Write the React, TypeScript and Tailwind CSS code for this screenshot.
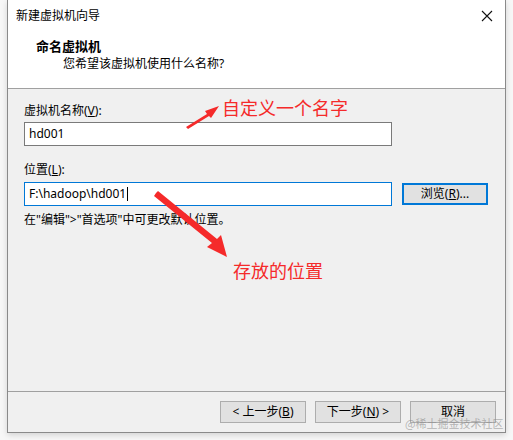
import React from "react";

const font = { fontFamily: '"Segoe UI", "Noto Sans", "Noto Sans CJK SC", sans-serif' };

function WinButton({ children, focused }: { children: React.ReactNode; focused?: boolean }) {
  return (
    <button
      className={`h-[22px] w-[86px] bg-[#e1e1e1] text-[12px] leading-none text-black flex items-center justify-center ${
        focused ? "border-2 border-[#0078d7]" : "border border-[#adadad]"
      }`}
    >
      {children}
    </button>
  );
}

function Arrows() {
  return (
    <svg className="absolute left-0 top-0 pointer-events-none" width="513" height="440">
      {/* arrow to name label */}
      <polygon points="186,127 207,114 205,111 219,106 211,118 209,116 188,129" fill="#f52a2a" />
      {/* arrow to location label */}
      <polygon points="156,193 158,191 217,239 221,235 227,257 207,247 212,243 154,196" fill="#f52a2a" />
    </svg>
  );
}

export default function App() {
  return (
    <div className="relative w-[513px] h-[440px] bg-[#f7f7f7] overflow-hidden" style={font}>
      <div className="ml-[7px] w-[499px] h-[433px] border-x border-b border-[#8a8a8a] bg-[#f0f0f0] flex flex-col shadow-[0_2px_6px_rgba(0,0,0,0.15)]">
        {/* Header */}
        <div className="h-[89px] bg-white border-b border-[#a0a0a0] flex flex-col">
          <div className="h-[31px] flex items-center justify-between pl-[8px] pr-[8px]">
            <span className="text-[12px] text-black">新建虚拟机向导</span>
            <svg width="14" height="14" viewBox="0 0 14 14" className="mr-[3px]">
              <path d="M2 2 L12 12 M12 2 L2 12" stroke="#111" strokeWidth="1.1" />
            </svg>
          </div>
          <div className="pl-[28px] text-[13px] font-bold text-black leading-[18px] mt-[6px]">命名虚拟机</div>
          <div className="pl-[55px] text-[12px] text-black leading-[18px]">您希望该虚拟机使用什么名称?</div>
        </div>

        {/* Body */}
        <div className="flex-1 flex flex-col pl-[16px] pt-[13px]">
          <div className="text-[12px] leading-[18px] text-black">
            虚拟机名称(<span className="underline">V</span>):
          </div>
          <div className="mt-[2px] w-[368px] h-[24px] bg-white border border-[#7a7a7a] flex items-center px-[4px] text-[12px]">
            hd001
          </div>
          <div className="mt-[15px] text-[12px] leading-[18px] text-black">
            位置(<span className="underline">L</span>):
          </div>
          <div className="mt-[3px] flex items-center gap-[10px]">
            <div className="w-[368px] h-[24px] bg-white border border-[#0078d7] flex items-center px-[4px] text-[12px]">
              F:\hadoop\hd001<span className="inline-block w-px h-[14px] bg-black ml-px" />
            </div>
            <WinButton focused>
              浏览(<span className="underline">R</span>)...
            </WinButton>
          </div>
          <div className="mt-[5px] text-[12px] leading-[18px] text-black">
            在"编辑"&gt;"首选项"中可更改默认位置。
          </div>
        </div>

        {/* Footer */}
        <div className="h-[41px] border-t border-[#a0a0a0] flex items-start justify-end gap-[9px] pt-[9px] pr-[9px]">
          <WinButton>
            &lt; 上一步(<span className="underline">B</span>)
          </WinButton>
          <WinButton>
            下一步(<span className="underline">N</span>) &gt;
          </WinButton>
          <WinButton>取消</WinButton>
        </div>
      </div>

      <span className="absolute left-[222px] top-[95px] text-[18px] leading-[24px] text-[#f52a2a]" style={{ fontFamily: '"Noto Sans CJK SC", sans-serif' }}>
        自定义一个名字
      </span>
      <span className="absolute left-[233px] top-[258px] text-[18px] leading-[24px] text-[#f52a2a]" style={{ fontFamily: '"Noto Sans CJK SC", sans-serif' }}>
        存放的位置
      </span>
      <span className="absolute left-[405px] top-[416px] whitespace-nowrap text-[11px] leading-[14px] text-[#8a8a8a]/60" style={{ fontFamily: '"Noto Sans CJK SC", sans-serif' }}>
        @稀土掘金技术社区
      </span>
      <Arrows />
    </div>
  );
}
